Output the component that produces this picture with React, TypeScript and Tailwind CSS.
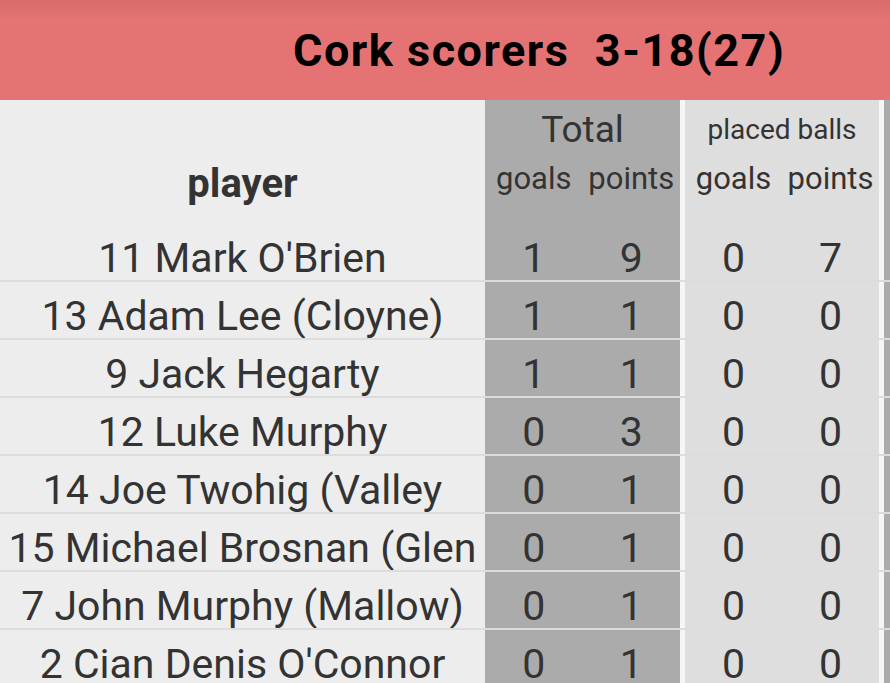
const rows: [string, string, string, string, string][] = [
  ["13 Adam Lee (Cloyne)", "1", "1", "0", "0"],
  ["9 Jack Hegarty", "1", "1", "0", "0"],
  ["12 Luke Murphy", "0", "3", "0", "0"],
  ["14 Joe Twohig (Valley", "0", "1", "0", "0"],
  ["15 Michael Brosnan (Glen", "0", "1", "0", "0"],
  ["7 John Murphy (Mallow)", "0", "1", "0", "0"],
  ["2 Cian Denis O'Connor", "0", "1", "0", "0"],
];

function Row({ cells }: { cells: [string, string, string, string, string] }) {
  const [name, tg, tp, pg, pp] = cells;
  return (
    <div className="flex h-[58px] border-b-2 border-[#dcdcdc] text-[41px] leading-none">
      <div className="w-[485px] shrink-0 flex items-center justify-center pt-[12px] whitespace-nowrap overflow-hidden">
        {name}
      </div>
      <div className="w-[195px] shrink-0 flex bg-[#ababab] pt-[12px]">
        <div className="w-1/2 flex items-center justify-center">{tg}</div>
        <div className="w-1/2 flex items-center justify-center">{tp}</div>
      </div>
      <div className="w-[5px] shrink-0 bg-[#f6f6f6]" />
      <div className="w-[194px] shrink-0 flex bg-[#dedede] pt-[12px]">
        <div className="w-1/2 flex items-center justify-center">{pg}</div>
        <div className="w-1/2 flex items-center justify-center">{pp}</div>
      </div>
      <div className="w-[5px] shrink-0 bg-[#f6f6f6]" />
      <div className="flex-1 bg-[#ababab]" />
    </div>
  );
}

export default function App() {
  return (
    <div className="w-[890px] h-[683px] overflow-hidden bg-[#ededed] text-[#333] font-['Roboto',sans-serif]">
      <div className="h-[100px] bg-gradient-to-b from-[#d86b6b] to-[#e57373] to-[20%] flex items-center pl-[293px]">
        <h1 className="text-[45px] font-bold text-black leading-none tracking-[1.5px] whitespace-pre">
          Cork scorers  3-18(27)
        </h1>
      </div>

      {/* header + first row share one block, no divider between them */}
      <div className="flex h-[182px] border-b-2 border-[#dcdcdc]">
        <div className="w-[485px] shrink-0 flex flex-col items-center">
          <div className="h-[124px] flex items-end pb-[10px] text-[40px] font-bold">player</div>
          <div className="h-[56px] flex items-center pt-[12px] text-[41px] leading-none">11 Mark O'Brien</div>
        </div>
        <div className="w-[195px] shrink-0 flex flex-col bg-[#ababab]">
          <div className="h-[50px] flex items-end justify-center text-[37px] leading-none pb-[2px]">Total</div>
          <div className="h-[48px] flex items-center pt-[10px] text-[31px]">
            <div className="w-1/2 text-center">goals</div>
            <div className="w-1/2 text-center">points</div>
          </div>
          <div className="h-[26px]" />
          <div className="h-[56px] flex items-center pt-[12px] text-[41px] leading-none">
            <div className="w-1/2 text-center">1</div>
            <div className="w-1/2 text-center">9</div>
          </div>
        </div>
        <div className="w-[5px] shrink-0 bg-[#f6f6f6]" />
        <div className="w-[194px] shrink-0 flex flex-col bg-[#dedede]">
          <div className="h-[50px] flex items-end justify-center text-[28px] leading-none pb-[6px]">placed balls</div>
          <div className="h-[48px] flex items-center pt-[10px] text-[31px]">
            <div className="w-1/2 text-center">goals</div>
            <div className="w-1/2 text-center">points</div>
          </div>
          <div className="h-[26px]" />
          <div className="h-[56px] flex items-center pt-[12px] text-[41px] leading-none">
            <div className="w-1/2 text-center">0</div>
            <div className="w-1/2 text-center">7</div>
          </div>
        </div>
        <div className="w-[5px] shrink-0 bg-[#f6f6f6]" />
        <div className="flex-1 bg-[#ababab]" />
      </div>

      {rows.map((r) => (
        <Row key={r[0]} cells={r} />
      ))}
    </div>
  );
}
